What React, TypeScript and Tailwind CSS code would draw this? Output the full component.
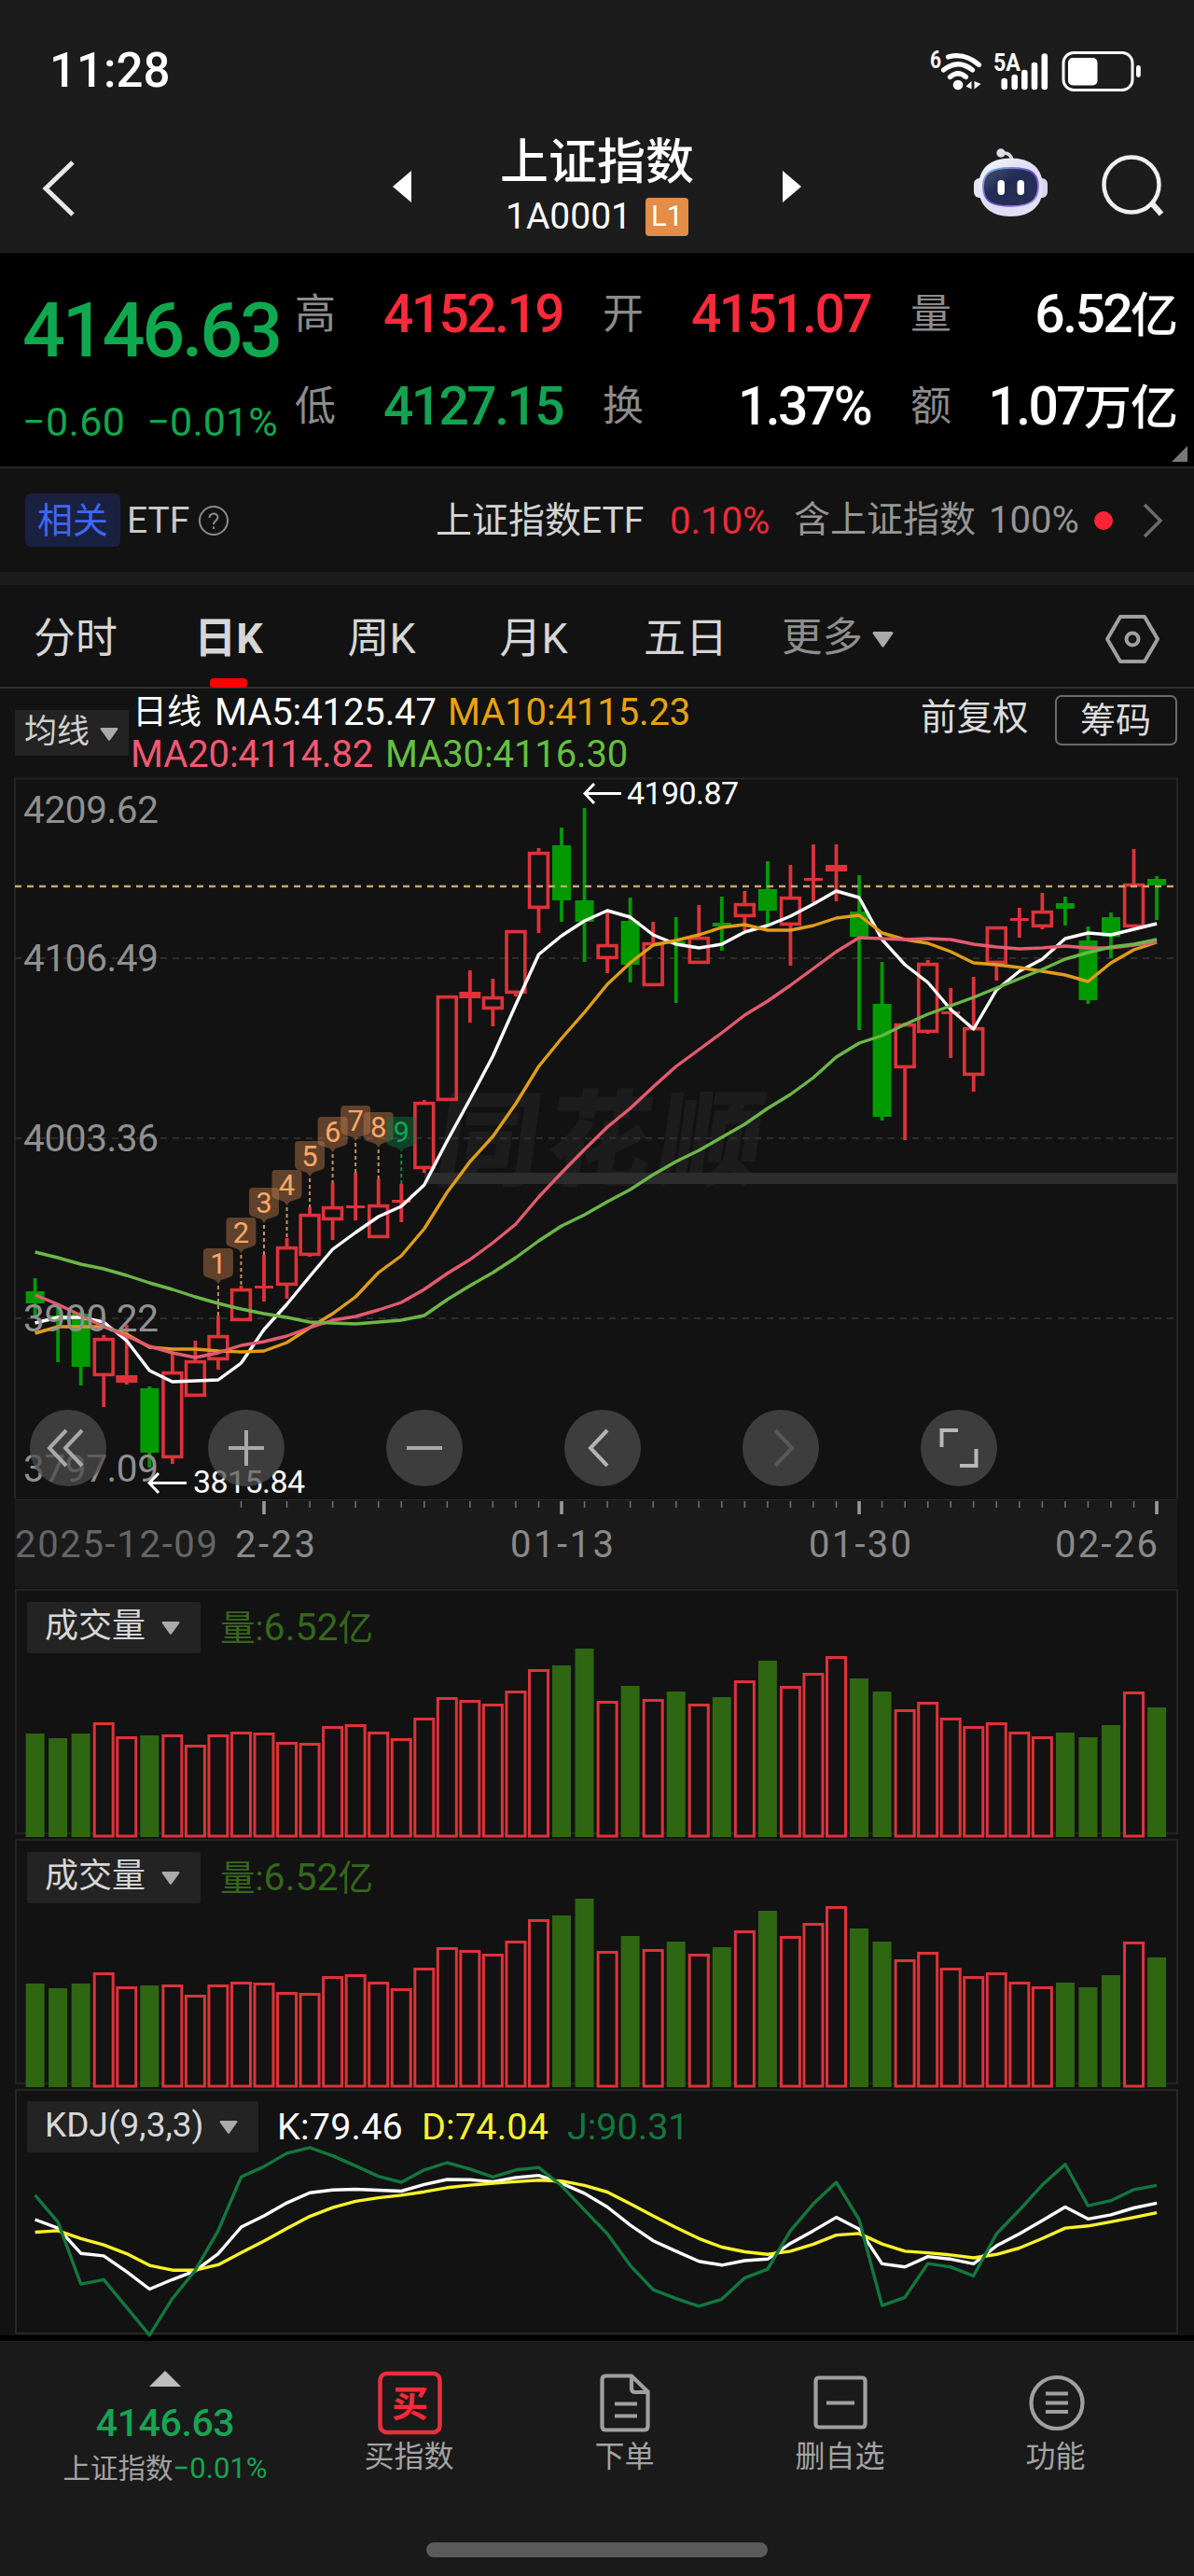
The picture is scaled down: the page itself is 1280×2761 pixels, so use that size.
import React, { useState } from 'react';

// [up, high, body top, body bottom, low] in chart units
type Candle = [number, number, number, number, number];

const candles: Candle[] = [
  [0, 1370, 1384, 1397, 1411], [0, 1402, 1410, 1415, 1460], [0, 1406, 1408, 1465, 1485], [1, 1431, 1434, 1475, 1508],
  [1, 1420, 1474, 1482, 1484], [0, 1486, 1488, 1557, 1573], [1, 1450, 1470, 1563, 1569], [1, 1437, 1458, 1497, 1497],
  [1, 1410, 1431, 1458, 1468], [1, 1378, 1381, 1416, 1416], [1, 1345, 1378, 1381, 1395], [1, 1327, 1336, 1378, 1392],
  [1, 1294, 1301, 1346, 1347], [1, 1268, 1293, 1308, 1329], [1, 1257, 1292, 1295, 1308], [1, 1264, 1291, 1327, 1327],
  [1, 1269, 1286, 1289, 1310], [1, 1179, 1181, 1253, 1257], [1, 1067, 1067, 1180, 1180], [1, 1040, 1063, 1070, 1096],
  [1, 1049, 1068, 1082, 1100], [1, 997, 997, 1065, 1068], [1, 909, 913, 974, 1000], [0, 887, 906, 965, 988],
  [0, 866, 965, 988, 1031], [1, 977, 1012, 1028, 1043], [0, 962, 987, 1034, 1053], [1, 988, 1010, 1057, 1057],
  [0, 983, 1009, 1012, 1075], [1, 970, 1004, 1033, 1033], [0, 961, 989, 993, 1019], [1, 955, 968, 983, 997],
  [0, 923, 953, 976, 993], [1, 927, 961, 992, 1035], [1, 905, 941, 944, 967], [1, 905, 927, 934, 966],
  [0, 938, 977, 1004, 1104], [0, 1031, 1076, 1197, 1201], [1, 1096, 1097, 1145, 1222], [1, 1029, 1032, 1107, 1108],
  [1, 1059, 1084, 1087, 1134], [1, 1047, 1101, 1153, 1170], [1, 993, 993, 1033, 1051], [1, 973, 984, 987, 1005],
  [1, 957, 976, 994, 996], [0, 961, 968, 974, 992], [0, 993, 1008, 1072, 1076], [0, 978, 983, 1004, 1027],
  [1, 910, 947, 994, 994], [0, 939, 942, 949, 986],
];

const ma5 = [1418, 1412, 1412, 1417, 1437, 1469, 1481, 1480, 1479, 1461, 1425, 1398, 1368, 1339, 1321, 1304, 1293, 1270, 1223, 1178, 1132, 1077, 1023, 1003, 987, 976, 983, 1002, 1012, 1016, 1012, 999, 992, 982, 969, 955, 962, 1007, 1034, 1053, 1082, 1103, 1061, 1041, 1028, 1006, 1000, 1002, 996, 990];
const ma10 = [1429, 1422, 1422, 1422, 1430, 1444, 1446, 1446, 1448, 1449, 1448, 1439, 1423, 1408, 1390, 1364, 1346, 1317, 1278, 1245, 1218, 1183, 1143, 1113, 1085, 1055, 1032, 1013, 1008, 1002, 994, 991, 997, 997, 992, 984, 981, 1000, 1007, 1011, 1020, 1032, 1034, 1037, 1041, 1045, 1052, 1032, 1018, 1010];
const ma20 = [1388, 1398, 1410, 1422, 1432, 1443, 1450, 1455, 1450, 1442, 1438, 1432, 1423, 1415, 1411, 1404, 1396, 1382, 1365, 1350, 1332, 1312, 1283, 1257, 1232, 1208, 1188, 1165, 1143, 1125, 1107, 1088, 1073, 1056, 1038, 1020, 1005, 1006, 1007, 1006, 1007, 1012, 1015, 1017, 1016, 1014, 1016, 1016, 1013, 1010];
const ma30 = [1342, 1348, 1355, 1360, 1367, 1375, 1382, 1390, 1397, 1403, 1408, 1412, 1417, 1418, 1419, 1417, 1415, 1410, 1393, 1378, 1364, 1348, 1330, 1314, 1302, 1288, 1275, 1259, 1245, 1233, 1219, 1205, 1188, 1173, 1155, 1133, 1118, 1110, 1098, 1087, 1078, 1069, 1059, 1049, 1039, 1028, 1021, 1015, 1012, 1007];

const volumes = [111, 106, 111, 123, 108, 109, 110, 99, 110, 113, 112, 102, 101, 119, 121, 113, 106, 128, 150, 147, 143, 157, 180, 184, 202, 146, 162, 148, 156, 143, 150, 168, 189, 162, 176, 194, 170, 156, 137, 145, 128, 119, 123, 113, 108, 112, 107, 120, 156, 139];

const kLine = [440, 467, 547, 555, 605, 660, 630, 602, 548, 464, 428, 387, 355, 346, 344, 347, 350, 329, 313, 314, 320, 307, 300, 325, 357, 400, 457, 507, 540, 572, 584, 570, 565, 515, 475, 433, 470, 580, 590, 557, 565, 580, 523, 485, 443, 400, 438, 425, 403, 388];
const dLine = [480, 475, 500, 520, 548, 585, 600, 600, 583, 545, 508, 468, 430, 402, 382, 371, 363, 352, 339, 331, 325, 320, 315, 318, 332, 353, 390, 428, 465, 500, 527, 542, 550, 540, 518, 489, 484, 517, 540, 545, 552, 561, 550, 530, 500, 467, 460, 447, 433, 418];
const jLine = [363, 448, 644, 630, 718, 806, 690, 600, 475, 305, 272, 230, 212, 238, 270, 303, 322, 283, 260, 280, 305, 283, 275, 333, 410, 485, 585, 662, 690, 714, 692, 625, 597, 475, 390, 322, 440, 712, 686, 579, 590, 618, 485, 410, 330, 265, 396, 380, 345, 332];

// day counters shown above the run-up, first one sits on candle 8
const counterTops = [1338, 1305, 1273, 1254, 1223, 1197, 1185, 1192, 1197];

const xAt = (i: number) => 37.6 + i * 24.54;
const toPoints = (ys: number[]) => ys.map((y, i) => `${xAt(i).toFixed(1)},${y}`).join(' ');
const toKdjPoints = (ys: number[]) => toPoints(ys.map((y) => Number((y / 2.953).toFixed(1))));

const RED = '#dd3339';

const Caret: React.FC<{ className?: string }> = ({ className }) => (
  <svg className={className} viewBox="0 0 20 14" fill="#aaaaaa" preserveAspectRatio="none"><path d="M1.5 0h17q1.5 0.6 0.8 1.8L11 13.2q-1 1-2 0L0.7 1.8Q0 0.6 1.5 0z" /></svg>
);

const StatusBar = () => (
  <div className="flex h-[120px] items-center justify-between pt-[31px] pl-[53px]">
    <span className="text-[51px] leading-none font-medium">11:28</span>
    <svg className="mr-[55px] h-[50px] w-[230px]" viewBox="995 51 230 50" fill="none" stroke="#fff" strokeLinecap="round">
      <text x="997" y="73" fontSize="25" fontWeight="700" fill="#fff" stroke="none" textLength="12" lengthAdjust="spacingAndGlyphs">6</text>
      <circle cx="1027" cy="91" r="5.3" fill="#fff" stroke="none" />
      <path d="M1018.5 82.5Q1027 75 1035.5 82.5M1011.5 75Q1027 62.5 1042.5 75M1016.5 61Q1034 56 1049.5 69.5" strokeWidth="5.2" />
      <path d="M1041.5 87v8.5l-6-3zM1044.5 95.5v-8.5l7 3z" fill="#fff" stroke="none" />
      <text x="1065" y="76" fontSize="26" fontWeight="700" fill="#fff" stroke="none" textLength="29" lengthAdjust="spacingAndGlyphs">5A</text>
      <path d="M1076.7 87v6M1087.7 83v10M1098.3 78v15M1109 70v23M1119.8 60.5v32.5" strokeWidth="6.6" />
      <rect x="1140" y="56.5" width="74" height="40" rx="11" strokeWidth="3" />
      <rect x="1145" y="62" width="31.5" height="29.5" rx="5" fill="#fff" stroke="none" />
      <rect x="1218" y="70" width="4.8" height="13" rx="2.4" fill="#fff" stroke="none" />
    </svg>
  </div>
);

const Robot = () => (
  <svg className="h-[76px] w-[82px]" viewBox="1042 159 82 76" fill="none">
    <defs>
      <linearGradient id="shell" x1="0" y1="0" x2="1" y2="1">
        <stop offset="0" stopColor="#f6f6f9" />
        <stop offset="0.5" stopColor="#dddcf3" />
        <stop offset="1" stopColor="#e4e2f6" />
      </linearGradient>
      <linearGradient id="rim" x1="0" y1="0" x2="1" y2="1">
        <stop offset="0" stopColor="#7fc4e0" />
        <stop offset="0.5" stopColor="#6c45c4" />
        <stop offset="1" stopColor="#a79df0" />
      </linearGradient>
      <linearGradient id="visor" x1="0" y1="0" x2="1" y2="1">
        <stop offset="0" stopColor="#46527a" />
        <stop offset="0.4" stopColor="#222c52" />
        <stop offset="1" stopColor="#2a3158" />
      </linearGradient>
    </defs>
    <path d="M1074 165q10-1 11 8" stroke="#d8d8e2" strokeWidth="3.5" />
    <circle cx="1073" cy="165" r="4.7" fill="#dedee6" />
    <rect x="1044" y="192" width="14" height="21" rx="6" fill="#e6e6f2" />
    <rect x="1109" y="192" width="14" height="21" rx="6" fill="#d6d4f4" />
    <path d="M1083.5 170.5c22 0 34.5 11 34.5 31s-13 31.5-34.5 31.5-34.5-11.5-34.5-31.5 12.5-31 34.5-31z" fill="url(#shell)" />
    <path d="M1083.5 181c21 0 29.5 5 29.5 20s-8.5 21-29.5 21-29.5-6-29.5-21 8.5-20 29.5-20z" fill="url(#visor)" stroke="url(#rim)" strokeWidth="1.8" />
    <rect x="1069.5" y="194" width="7.5" height="16" rx="3.7" fill="#fff" />
    <rect x="1090.5" y="194" width="7.5" height="16" rx="3.7" fill="#fff" />
  </svg>
);

const Header = () => (
  <div className="flex h-[151px] items-center">
    <svg className="mt-[13px] ml-[44px] h-[64px] w-[38px]" viewBox="0 0 38 64" fill="none" stroke="#e8e8e8" strokeWidth="5"><path d="M34 4L5 32l29 28" /></svg>
    <svg className="mt-[8px] ml-[339px] h-[34px] w-[20px]" viewBox="0 0 20 34" fill="#fff"><path d="M20 0v34L0 17z" /></svg>
    <div className="flex w-[398px] flex-col items-center pt-[9px]">
      <div className="text-[52px] leading-[56px] font-medium">上证指数</div>
      <div className="mt-[8px] flex items-center">
        <span className="text-[39px] leading-[42px]">1A0001</span>
        <span className="ml-[15px] flex h-[41px] w-[46px] items-center justify-center rounded-[4px] bg-[#e38d48] text-[31px]">L1</span>
      </div>
    </div>
    <svg className="mt-[8px] h-[34px] w-[20px]" viewBox="0 0 20 34" fill="#fff"><path d="M0 0v34l20-17z" /></svg>
    <div className="ml-[183px]"><Robot /></div>
    <svg className="mt-[8px] ml-[55px] h-[72px] w-[72px]" viewBox="1179 164 72 72" fill="none" stroke="#f0f0f0" strokeWidth="4.5"><circle cx="1213" cy="198" r="29.5" /><path d="M1234 217l11 12.5" strokeWidth="6" /></svg>
  </div>
);

const Stat: React.FC<{ label: string; value: string; unit?: string; color: string; width: string }> = ({ label, value, unit, color, width }) => (
  <div className={`flex items-center justify-between ${width}`}>
    <span className="text-[44px] leading-none text-[#8c8c8c]">{label}</span>
    <span className={`flex items-baseline text-[57px] leading-none font-medium tracking-[-2.6px] ${color}`}>
      {value}
      {unit && <span className="text-[51px] leading-none tracking-[-1px]">{unit}</span>}
    </span>
  </div>
);

const Quote = () => (
  <div className="relative flex h-[229px] bg-black">
    <div className="w-[316px] pl-[24px] text-[#0fa84f]">
      <div className="pt-[43px] text-[81px] leading-[82px] font-medium tracking-[-3.3px]">4146.63</div>
      <div className="mt-[34px] flex text-[43px] leading-[44px] tracking-[0.4px]">
        <span>−0.60</span>
        <span className="ml-[23px] tracking-[0.1px]">−0.01%</span>
      </div>
    </div>
    <div className="flex flex-col gap-[42px] pt-[37px]">
      <div className="flex h-[57px] gap-[43px]">
        <Stat label="高" value="4152.19" color="text-[#fb2a3b]" width="w-[287px]" />
        <Stat label="开" value="4151.07" color="text-[#fb2a3b]" width="w-[287px]" />
        <Stat label="量" value="6.52" unit="亿" color="text-white" width="w-[286px]" />
      </div>
      <div className="flex h-[57px] gap-[43px]">
        <Stat label="低" value="4127.15" color="text-[#14a352]" width="w-[287px]" />
        <Stat label="换" value="1.37%" color="text-white" width="w-[287px]" />
        <Stat label="额" value="1.07" unit="万亿" color="text-white" width="w-[286px]" />
      </div>
    </div>
    <svg className="absolute right-[7px] bottom-[5px] h-[17px] w-[17px]" viewBox="0 0 17 17" fill="#777"><path d="M17 0v17H0z" /></svg>
  </div>
);

const RelatedEtf = () => (
  <div className="flex h-[113px] items-center border-t-2 border-[#262626] pl-[27px] text-[39px] leading-none">
    <span className="flex h-[57px] w-[102px] items-center justify-center rounded-[6px] bg-[#1a2140] text-[38px] text-[#3d68fb]">相关</span>
    <span className="ml-[7px] w-[68px] pt-[2px] text-[#c9c9c9]">ETF</span>
    <svg className="ml-[8px] h-[34px] w-[34px]" viewBox="0 0 34 34" fill="none" stroke="#8c8c8c" strokeWidth="2"><circle cx="17" cy="17" r="15" /><path d="M12.5 14c0-6 9-6 9-0.5 0 3.5-4.5 3.5-4.5 7.5M17 23.5v2.500" /></svg>
    <span className="ml-[221px] w-[225px] pt-[1px] whitespace-nowrap text-[#d4d4d4]">上证指数ETF</span>
    <span className="ml-[26px] w-[109px] pt-[2px] text-[40px] text-[#f22b3a]">0.10%</span>
    <span className="ml-[24px] flex w-[310px] pt-[1px] whitespace-nowrap text-[#969696]">含上证指数<span className="ml-[14px] text-[40px]">100%</span></span>
    <span className="ml-[12px] h-[20px] w-[20px] rounded-full bg-[#ff2436]" />
    <svg className="ml-[31px] h-[40px] w-[24px]" viewBox="0 0 24 40" fill="none" stroke="#6c6c6c" strokeWidth="3.500"><path d="M3 3l17 17L3 37" /></svg>
  </div>
);

const tabs = [
  { name: '分时', box: 'ml-[26px] w-[110px]' },
  { name: '日K', box: 'ml-[54px] w-[110px]' },
  { name: '周K', box: 'ml-[54px] w-[110px]' },
  { name: '月K', box: 'ml-[53px] w-[110px]' },
  { name: '五日', box: 'ml-[53px] w-[110px]' },
];

const PeriodTabs = () => {
  const [active, setActive] = useState('日K');
  return (
    <div className="flex h-[111px] border-b-2 border-[#303030] text-[45px] text-[#d6d6d6]">
      {tabs.map((tab) => (
        <button key={tab.name} onClick={() => setActive(tab.name)} className={`relative h-[111px] pt-[4px] leading-none whitespace-nowrap ${tab.box} ${active === tab.name ? 'font-bold' : ''}`}>
          {tab.name}
          {active === tab.name && <span className="absolute bottom-[1px] left-[35px] h-[10px] w-[40px] rounded-[4px] bg-[#fd0000]" />}
        </button>
      ))}
      <div className="ml-[48px] flex items-center pt-[5px] text-[43.5px] text-[#8e8e8e]">
        更多
        <Caret className="mt-[2px] ml-[10px] h-[17px] w-[23px]" />
      </div>
      <svg className="mt-[31px] ml-[225px] h-[54px] w-[62px]" viewBox="0 0 62 54" fill="none" stroke="#a0a0a0" strokeWidth="4"><path d="M18 3h26l14 24-14 24H18L4 27z" strokeLinejoin="round" /><circle cx="31" cy="27" r="6.5" /></svg>
    </div>
  );
};

const MaLegend = () => (
  <div className="flex h-[96px] text-[40px]">
    <div className="mt-[23px] ml-[16px] flex h-[49px] w-[122px] items-center bg-[#232323] pl-[10px] text-[35px] text-[#d0d0d0]">
      均线
      <Caret className="mt-[2px] ml-[11px] h-[14px] w-[20px]" />
    </div>
    <div className="w-[847px] pl-[2px] leading-[46px] whitespace-nowrap">
      <div className="flex h-[46px] pt-[3px]">
        <span className="w-[90px] pl-[2px] text-[37px]">日线</span>
        <span className="w-[250px] tracking-[-0.1px]">MA5:4125.47</span>
        <span className="tracking-[-0.1px] text-[#e8a20f]">MA10:4115.23</span>
      </div>
      <div className="flex pt-[2px]">
        <span className="w-[273px] tracking-[-0.1px] text-[#f25872]">MA20:4114.82</span>
        <span className="tracking-[-0.1px] text-[#65c03f]">MA30:4116.30</span>
      </div>
    </div>
    <div className="pt-[9px] pl-[2px] text-[38.5px] leading-[44px] text-[#dcdcdc]">前复权</div>
    <div className="mt-[7px] ml-[28px] flex h-[54px] w-[131px] items-center justify-center rounded-[7px] border-2 border-[#6b6b6b] text-[38px] text-[#dcdcdc]">筹码</div>
  </div>
);

const controls = [
  { id: 'first', d: 'M39 22L21 41l18 19M56 22L38 41l18 19', color: '#a9a9a9' },
  { id: 'plus', d: 'M22 41h38M41 22v38', color: '#a9a9a9' },
  { id: 'minus', d: 'M22 41h38', color: '#a9a9a9' },
  { id: 'prev', d: 'M46 22L28 41l18 19', color: '#b4b4b4' },
  { id: 'next', d: 'M35 22l18 19-18 19', color: '#595959' },
  { id: 'expand', d: 'M40 22H22.5v18M42 60h17.5V42', color: '#b8b8b8' },
];

const MainChart = () => (
  <div className="relative h-[773px]">
    <svg className="block h-[773px] w-[1280px] overflow-visible" viewBox="0 834 1280 773" fill="none">
      <text x="463" y="1262" fontSize="112" fontWeight="900" fill="#1c1c1c" textLength="350" transform="skewX(-8)" style={{ transformOrigin: '455px 1262px' }}>同花顺</text>
      <path d="M16 1606V834.5H1262V1606" stroke="#242424" strokeWidth="2" />
      <path d="M16 1027H1262M16 1220H1262M16 1413H1262" stroke="#2e2e2e" strokeWidth="2" strokeDasharray="7 6" />
      <rect x="455" y="1257" width="807" height="12" fill="#2c2c2c" />

      {candles.map(([up, high, top, bottom, low], i) => {
        const x = xAt(i);
        const color = up ? RED : '#009a00';
        const hollow = up && bottom - top > 9;
        const half = up && bottom - top > 4 ? 11.5 : 10;
        return (
          <g key={i}>
            <path d={`M${x} ${high}V${top + 1}M${x} ${bottom - 1}V${low}`} stroke={color} strokeWidth="3.8" />
            {hollow
              ? <rect x={x - half + 1.6} y={top + 1.6} width={half * 2 - 3.2} height={bottom - top - 3.2} stroke={color} strokeWidth="3.6" />
              : <rect x={x - half} y={top} width={half * 2} height={bottom - top} fill={color} />}
          </g>
        );
      })}

      <path d="M16 950H1262" stroke="#c9a56c" strokeWidth="2.4" strokeDasharray="7 6" />

      {counterTops.map((top, i) => {
        const x = xAt(i + 8);
        const last = i === 8;
        return (
          <g key={i}>
            <path d={`M${x} ${top + 40}V${candles[i + 8][1]}`} stroke={last ? '#11874a' : '#c98d62'} strokeWidth="2" strokeDasharray="4 3" />
            <path d={`M${x - 12} ${top}h24q4 0 4 4v22q0 4-4 5l-9 3-3 4-3-4-9-3q-4-1-4-5v-22q0-4 4-4z`} fill={last ? '#0f7a45' : '#c17c4b'} fillOpacity="0.45" />
            <text x={x} y={top + 27} textAnchor="middle" fontSize="31" fill={last ? '#12a656' : '#fda967'}>{i + 1}</text>
          </g>
        );
      })}

      <g strokeWidth="3.4" strokeLinejoin="round">
        <polyline points={toPoints(ma5)} stroke="#ffffff" />
        <polyline points={toPoints(ma10)} stroke="#e09d1a" />
        <polyline points={toPoints(ma20)} stroke="#e55a70" />
        <polyline points={toPoints(ma30)} stroke="#6cb748" />
      </g>

      <g fontSize="40.5" fill="#909090">
        <text x="25" y="882" textLength="145">4209.62</text>
        <text x="25" y="1041" textLength="145">4106.49</text>
        <text x="25" y="1234" textLength="145">4003.36</text>
        <text x="25" y="1427" textLength="145">3900.22</text>
        <text x="25" y="1588" textLength="145">3797.09</text>
      </g>
      <g fontSize="34" fill="#fff">
        <text x="672" y="862" textLength="120">4190.87</text>
        <text x="207" y="1600" textLength="120">3815.84</text>
      </g>
      <path d="M666 850.5H627M637 840l-10 10.5 10 10.5M200 1589.5H160M170 1579l-10 10.5 10 10.5" stroke="#fff" strokeWidth="3" />
    </svg>
    <div className="absolute top-[677px] left-[32px] flex gap-[109px]">
      {controls.map((c) => (
        <button key={c.id} className="h-[82px] w-[82px] rounded-full bg-[#4c4c4c]/75">
          <svg className="h-[82px] w-[82px]" viewBox="0 0 82 82" fill="none" stroke={c.color} strokeWidth="4"><path d={c.d} /></svg>
        </button>
      ))}
    </div>
  </div>
);

const DateAxis = () => (
  <svg className="block h-[96px] w-[1280px]" viewBox="0 1607 1280 96">
    <rect x="16" y="1608" width="1246" height="94" fill="#1a1a1a" />
    <path d="M16 1607H1262" stroke="#2a2a2a" strokeWidth="2" />
    {candles.map((_, i) => {
      if (i < 9) return null;
      const major = [10, 23, 36, 49].includes(i);
      return <rect key={i} x={xAt(i) - (major ? 1.8 : 0.8)} y="1609" width={major ? 3.6 : 1.6} height={major ? 14 : 7} fill={major ? '#9a9a9a' : '#6e6e6e'} />;
    })}
    <g fontSize="40" fill="#8a8a8a">
      <text x="16" y="1669" fill="#656565" textLength="217">2025-12-09</text>
      <text x="252" y="1669" textLength="86">2-23</text>
      <text x="547" y="1669" textLength="111">01-13</text>
      <text x="867" y="1669" textLength="110">01-30</text>
      <text x="1131" y="1669" textLength="110">02-26</text>
    </g>
  </svg>
);

const VolumePanel = () => (
  <div className="relative h-[268px]">
    <svg className="block h-[268px] w-[1280px]" viewBox="0 0 1280 268" fill="none">
      <path d="M17 262V1H1262V262zM16 262H1262" stroke="#242424" strokeWidth="2" />
      {volumes.map((v, i) => {
        const x = xAt(i);
        return candles[i][0]
          ? <rect key={i} x={x - 10} y={266 - v + 1.5} width="20" height={v - 2.5} fill="#121212" stroke={RED} strokeWidth="3" />
          : <rect key={i} x={x - 10} y={266 - v} width="20" height={v} fill="#2f6612" />;
      })}
    </svg>
    <div className="absolute top-[11px] left-[29px] flex items-center">
      <div className="flex h-[55px] w-[186px] items-center rounded-[2px] bg-[#232323] pl-[19px] text-[36px] text-[#d8d8d8]">
        <span className="pb-[3px]">成交量</span>
        <Caret className="ml-[17px] h-[14px] w-[20px]" />
      </div>
      <span className="ml-[21px] text-[37.5px] text-[#35671b]">量:<span className="text-[41px]">6.52</span>亿</span>
    </div>
  </div>
);

const KdjPanel = () => (
  <div className="relative h-[270px] border-b-[6px] border-black">
    <svg className="block h-[264px] w-[1280px] overflow-visible" viewBox="0 9 1280 264" fill="none" strokeWidth="3.4" strokeLinejoin="round">
      <rect x="17" y="10" width="1245" height="261" stroke="#262626" strokeWidth="2" />
      <polyline points={toKdjPoints(kLine)} stroke="#ffffff" />
      <polyline points={toKdjPoints(dLine)} stroke="#fbf22c" />
      <polyline points={toKdjPoints(jLine)} stroke="#13773f" />
    </svg>
    <div className="absolute top-[11px] left-[29px] flex items-center text-[39.5px]">
      <div className="flex h-[55px] w-[248px] items-center rounded-[2px] bg-[#232323] pl-[19px] text-[37px] text-[#d8d8d8]">
        <span className="w-[178px] pb-[3px]">KDJ(9,3,3)</span>
        <Caret className="ml-[9px] h-[14px] w-[20px]" />
      </div>
      <span className="ml-[20px] w-[155px] tracking-[0.2px]">K:79.46</span>
      <span className="w-[156px] tracking-[0.2px] text-[#fbf22c]">D:74.04</span>
      <span className="text-[#13773f]">J:90.31</span>
    </div>
  </div>
);

const actions = [
  {
    label: '买指数',
    icon: <><rect x="4.5" y="4" width="64" height="63" rx="7" stroke="#e8303a" strokeWidth="4.5" /><text x="36.5" y="50" textAnchor="middle" fontSize="39" fontWeight="700" fill="#fb2939" stroke="none">买</text></>,
  },
  {
    label: '下单',
    icon: <path d="M43 6.5H15.5q-4 0-4 4v50q0 4 4 4h41q4 0 4-4V23.5zM43 6.5v13.5q0 4 4 4h13.5M25 36.5h24M25 49.5h24" />,
  },
  { label: '删自选', icon: <path d="M13 8.5h46q3.5 0 3.5 3.5v46q0 3.5-3.5 3.5H13q-3.5 0-3.5-3.5V12q0-3.5 3.5-3.5zM21 35.5h30" /> },
  { label: '功能', icon: <><circle cx="37" cy="35.5" r="27.5" /><path d="M25 25.5h24M25 35.5h24M25 45h24" /></> },
];

const BottomBar = () => (
  <div className="flex h-[252px] flex-col bg-[#1a1a1a]">
    <div className="flex flex-1 pl-[31px]">
      <div className="flex w-[292px] flex-col items-center pt-[32px]">
        <svg className="h-[17px] w-[34px]" viewBox="0 0 34 17" fill="#bdbdbd"><path d="M17 0l17 17H0z" /></svg>
        <div className="mt-[17px] text-[41px] leading-[44px] font-medium tracking-[-0.4px] text-[#17a453]">4146.63</div>
        <div className="mt-[8px] flex text-[29.5px] leading-[38px] whitespace-nowrap text-[#a3a3a3]">上证指数<span className="text-[31px] text-[#17a453]">−0.01%</span></div>
      </div>
      {actions.map((a) => (
        <div key={a.label} className="flex w-[231px] flex-col items-center pt-[31px]">
          <svg className="h-[71px] w-[72px]" viewBox="0 0 72 71" fill="none" stroke="#a0a0a0" strokeWidth="4.200">{a.icon}</svg>
          <div className="mt-[3px] text-[32px] leading-[38px] text-[#a3a3a3]">{a.label}</div>
        </div>
      ))}
    </div>
    <div className="mx-auto mb-[20px] h-[16px] w-[366px] rounded-full bg-[#5a5a5a]" />
  </div>
);

export default function App() {
  return (
    <div className="h-[2761px] w-[1280px] overflow-hidden bg-[#121212] font-[Roboto,'Noto_Sans_CJK_SC',sans-serif] text-white">
      <div className="bg-[#1c1c1c]">
        <StatusBar />
        <Header />
      </div>
      <Quote />
      <RelatedEtf />
      <div className="h-[14px] bg-[#1c1c1c]" />
      <PeriodTabs />
      <MaLegend />
      <MainChart />
      <DateAxis />
      <VolumePanel />
      <VolumePanel />
      <KdjPanel />
      <BottomBar />
    </div>
  );
}
